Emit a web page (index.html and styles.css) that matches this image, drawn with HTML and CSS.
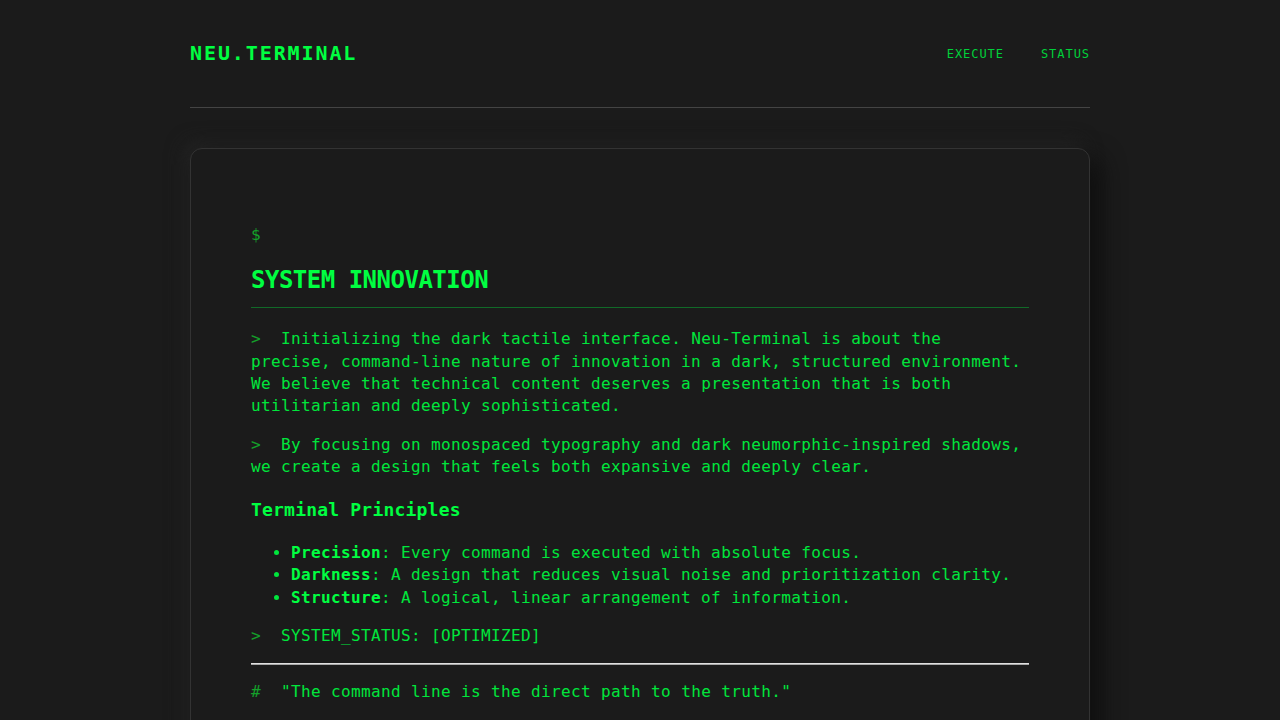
FILE: index.html
```html
<!DOCTYPE html>
<html lang="en">
<head>
<meta charset="utf-8">
<title>NEU.TERMINAL</title>
<link rel="stylesheet" href="styles.css">
</head>
<body>
<div class="page">
  <header class="site-header">
    <div class="logo">NEU.TERMINAL</div>
    <nav class="nav">
      <a href="#" class="nav-link">EXECUTE</a>
      <a href="#" class="nav-link">STATUS</a>
    </nav>
  </header>
  <main class="card">
    <div class="cursor">$</div>
    <h2 class="title">SYSTEM INNOVATION</h2>
    <p class="line cmd">Initializing the dark tactile interface. Neu-Terminal is about the precise, command-line nature of innovation in a dark, structured environment. We believe that technical content deserves a presentation that is both utilitarian and deeply sophisticated.</p>
    <p class="line cmd">By focusing on monospaced typography and dark neumorphic-inspired shadows, we create a design that feels both expansive and deeply clear.</p>
    <h3 class="subtitle">Terminal Principles</h3>
    <ul class="list">
      <li><strong>Precision</strong>: Every command is executed with absolute focus.</li>
      <li><strong>Darkness</strong>: A design that reduces visual noise and prioritization clarity.</li>
      <li><strong>Structure</strong>: A logical, linear arrangement of information.</li>
    </ul>
    <p class="line cmd">SYSTEM_STATUS: [OPTIMIZED]</p>
    <hr class="divider">
    <p class="line quote">"The command line is the direct path to the truth."</p>
  </main>
</div>
</body>
</html>
```

FILE: styles.css
```css
html, body {
  margin: 0;
  padding: 0;
  background: #1b1b1b;
}

body {
  font-family: "DejaVu Sans Mono", "Liberation Mono", monospace;
  color: #00e63c;
  font-size: 16px;
  line-height: 1.4;
  letter-spacing: 0.37px;
}

.page {
  width: 900px;
  margin: 0 auto;
  padding-top: 39px;
}

.site-header {
  display: flex;
  justify-content: space-between;
  align-items: center;
  padding-bottom: 40px;
  border-bottom: 1px solid #444444;
}

.logo {
  font-size: 20px;
  font-weight: bold;
  letter-spacing: 1.9px;
  line-height: 28px;
  color: #00ff41;
}

.nav {
  display: flex;
  gap: 37px;
  padding-top: 2px;
}

.nav-link {
  font-size: 12px;
  letter-spacing: 0.95px;
  color: #00d03a;
  text-decoration: none;
}

.card {
  margin-top: 40px;
  padding: 75px 60px 60px;
  border: 1px solid #333333;
  border-radius: 12px;
  background: #1b1b1b;
  box-shadow: 10px 10px 24px #0e0e0e, -6px -6px 18px #242424;
}

.cursor {
  color: #14a02a;
}

.title {
  font-size: 24px;
  line-height: 1.2;
  letter-spacing: -0.5px;
  font-weight: bold;
  color: #00ff41;
  margin: 20px 0 20px;
  padding-bottom: 12px;
  border-bottom: 1px solid rgba(0, 255, 65, 0.35);
}

.line {
  margin: 16px 0;
}

.cmd::before,
.quote::before {
  content: ">";
  margin-right: 20px;
  color: #14a02a;
}

.quote::before {
  content: "#";
}

.subtitle {
  font-size: 18px;
  line-height: 1.4;
  letter-spacing: 0.2px;
  font-weight: bold;
  color: #00ff41;
  margin: 18px 0 20px;
}

.list {
  margin: 16px 0;
  padding-left: 40px;
}

.list strong {
  color: #00ff41;
}

.divider {
  border: none;
  border-top: 1px solid #e0e0e0;
  border-bottom: 1px solid #a8a8a8;
  height: 0;
  margin: 16px 0;
}
```
